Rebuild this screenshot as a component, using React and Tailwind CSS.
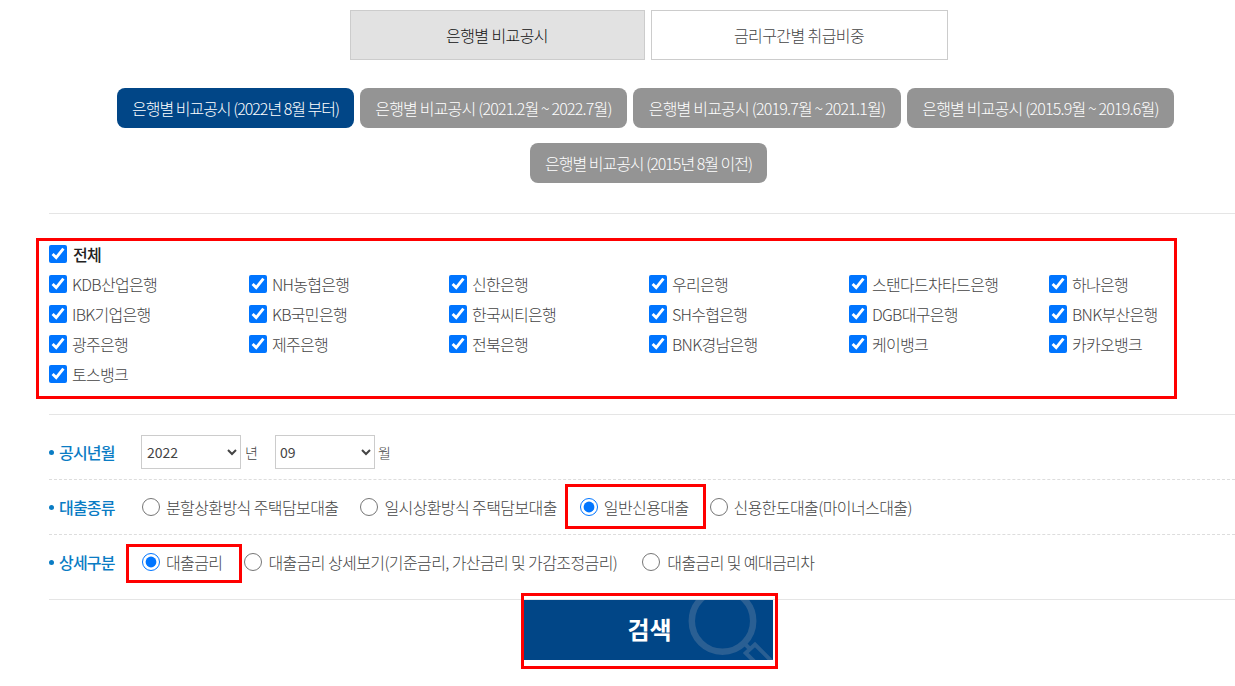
import { useState } from 'react';

const FONT = "font-['Noto_Sans_CJK_KR','Noto_Sans',sans-serif]";

const PERIODS = [
  { text: '은행별 비교공시 (2022년 8월 부터)', size: 'w-[237px] tracking-[-1px]' },
  { text: '은행별 비교공시 (2021.2월 ~ 2022.7월)', size: 'w-[267px]' },
  { text: '은행별 비교공시 (2019.7월 ~ 2021.1월)', size: 'w-[268px]' },
  { text: '은행별 비교공시 (2015.9월 ~ 2019.6월)', size: 'w-[267px]' },
  { text: '은행별 비교공시 (2015년 8월 이전)', size: 'w-[237px] ml-[6px] tracking-[-1px]' },
];

const BANKS = [
  'KDB산업은행', 'NH농협은행', '신한은행', '우리은행', '스탠다드차타드은행', '하나은행',
  'IBK기업은행', 'KB국민은행', '한국씨티은행', 'SH수협은행', 'DGB대구은행', 'BNK부산은행',
  '광주은행', '제주은행', '전북은행', 'BNK경남은행', '케이뱅크', '카카오뱅크',
  '토스뱅크',
];

function Label({ children }) {
  return (
    <div className="w-[92px] shrink-0 flex items-center gap-[5px] font-medium text-[#0a7cc4]">
      <span className="w-[5px] h-[5px] rounded-full bg-[#0a7cc4]" />
      {children}
    </div>
  );
}

function Radio({ name, label, checked, className }) {
  return (
    <label className={`flex items-center tracking-[-0.6px] ${className}`}>
      <input type="radio" name={name} defaultChecked={checked} className="w-[18px] h-[18px] m-0" />
      <span>{label}</span>
    </label>
  );
}

export default function App() {
  const [active] = useState(0);

  return (
    <div className={`${FONT} w-[1235px] h-[686px] overflow-hidden bg-white text-[16px] font-light tracking-[-0.8px] text-[#444]`}>
      <div className="pt-[10px] pl-[62px] flex justify-center gap-[6px] tracking-[-0.6px]">
        <button className="w-[295px] h-[50px] border border-[#ccc] bg-[#e2e2e2] text-[#111]">은행별 비교공시</button>
        <button className="w-[297px] h-[50px] border border-[#ccc] bg-white text-[#444]">금리구간별 취급비중</button>
      </div>

      <div className="mt-[28px] pl-[56px] flex flex-wrap justify-center gap-x-[6px] gap-y-[15px]">
        {PERIODS.map((p, i) => (
          <button
            key={p.text}
            className={`h-[40px] rounded-lg text-white ${p.size} ${i === active ? 'bg-[#014687]' : 'bg-[#949494]'}`}
          >
            {p.text}
          </button>
        ))}
      </div>

      <div className="ml-[49px] mt-[30px] border-t border-[#e5e5e5]" />

      <div className="relative ml-[49px] pt-[29px] pb-[25px] border-b border-[#e5e5e5]">
        <label className="flex items-center gap-[6px] h-[22px] font-medium text-[#222]">
          <input type="checkbox" defaultChecked className="w-[18px] h-[18px] m-0" />
          전체
        </label>
        <div className="mt-[4px] grid grid-cols-[repeat(6,200px)] auto-rows-[30px]">
          {BANKS.map((b) => (
            <label key={b} className="flex items-center gap-[5px] tracking-[-0.7px]">
              <input type="checkbox" defaultChecked className="w-[18px] h-[18px] m-0" />
              {b}
            </label>
          ))}
        </div>
        <div className="absolute left-[-13px] top-[24px] w-[1141px] h-[161px] border-[3px] border-[#f00]" />
      </div>

      <div className="ml-[49px]">
        <div className="h-[65px] pt-[20px] flex items-start border-b border-dashed border-[#ddd]">
          <div className="h-[34px] flex items-center">
            <Label>공시년월</Label>
            <select className="w-[100px] h-[34px] border border-[#ccc] px-[1px] text-[14px] tracking-normal font-normal text-[#444]">
              <option>2022</option>
            </select>
            <span className="ml-[4px] w-[30px] text-[14px]">년</span>
            <select className="w-[100px] h-[34px] border border-[#ccc] pl-0 pr-[1px] text-[14px] tracking-normal font-normal text-[#444]">
              <option>09</option>
            </select>
            <span className="ml-[3px] text-[14px]">월</span>
          </div>
        </div>

        <div className="relative h-[55px] flex items-center border-b border-dashed border-[#ddd]">
          <Label>대출종류</Label>
          <Radio name="kind" label="분할상환방식 주택담보대출" className="ml-[1px] gap-[6px]" />
          <Radio name="kind" label="일시상환방식 주택담보대출" className="ml-[22px] gap-[6px]" />
          <Radio name="kind" label="일반신용대출" checked className="ml-[23px] gap-[6px]" />
          <Radio name="kind" label="신용한도대출(마이너스대출)" className="ml-[21px] gap-[6px]" />
          <div className="absolute left-[516px] top-[4px] w-[141px] h-[45px] border-[3px] border-[#f00]" />
        </div>

        <div className="relative h-[65px] pb-[10px] flex items-center border-b border-[#e5e5e5]">
          <Label>상세구분</Label>
          <Radio name="detail" label="대출금리" checked className="ml-[1px] gap-[6px]" />
          <Radio name="detail" label="대출금리 상세보기(기준금리, 가산금리 및 가감조정금리)" className="ml-[22px] gap-[6px]" />
          <Radio name="detail" label="대출금리 및 예대금리차" className="ml-[25px] gap-[7px]" />
          <div className="absolute left-[77px] top-[9px] w-[116px] h-[39px] border-[3px] border-[#f00]" />
        </div>
      </div>

      <div className="relative w-[249px] h-[60px] ml-[524px]">
        <button className="relative w-full h-full overflow-hidden bg-[#014687] text-white text-[24px] font-bold tracking-normal">
          <span className="relative left-[1px] top-[-1px]">검색</span>
          <svg className="absolute left-[160px] top-[-20px]" width="100" height="90" viewBox="0 0 100 90" fill="none" stroke="#2a5f93" strokeWidth="6.5">
            <circle cx="38.5" cy="41" r="30.7" />
            <path d="M60 63l7 7M71 64.5L61.7 73 80 91l9-8.5z" strokeWidth="4" />
          </svg>
        </button>
        <div className="absolute left-[-3px] top-[-7px] w-[257px] h-[76px] border-[3px] border-[#f00]" />
      </div>
    </div>
  );
}
